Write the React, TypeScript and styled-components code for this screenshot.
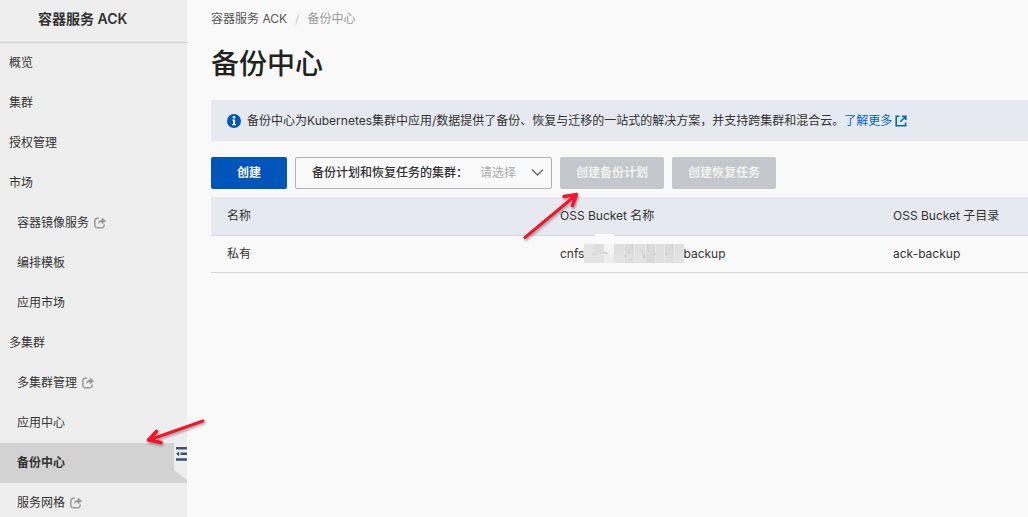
import React from "react";
import styled, { createGlobalStyle } from "styled-components";

const GlobalStyle = createGlobalStyle`
  * { box-sizing: border-box; }
  body {
    margin: 0;
    background: #f9f9f9;
    color: #333;
    font-family: Inter, "Noto Sans CJK SC", sans-serif;
    font-size: 12px;
    line-height: 20px;
  }
  button, select { font: inherit; }
`;

const Page = styled.div`
  position: relative;
  display: flex;
  height: 100vh;
  overflow: hidden;
`;

const Sidebar = styled.aside`
  flex: 0 0 187px;
  background: #eee;
  overflow: hidden;
`;

const ProductName = styled.div`
  height: 43px;
  padding: 9px 0 0 38px;
  border-bottom: 1px solid #ccc;
  font-size: 14px;
  font-weight: 600;
`;

const Menu = styled.ul`
  margin: 0;
  padding: 0;
  list-style: none;
`;

const MenuItem = styled.li`
  position: relative;
`;

const MenuLink = styled.a<{ $nested?: boolean; $active?: boolean }>`
  display: flex;
  align-items: center;
  gap: 5px;
  height: 40px;
  padding-left: ${(p) => (p.$nested ? 17 : 9)}px;
  background: ${(p) => (p.$active ? "#d2d2d2" : "transparent")};
  color: #333;
  font-weight: ${(p) => (p.$active ? 600 : 400)};
  text-decoration: none;
`;

const CollapseButton = styled.button`
  position: absolute;
  top: 0;
  right: 0;
  width: 13px;
  height: 38px;
  padding: 0;
  border: 0;
  background: none;
  svg { display: block; }
`;

const Main = styled.main`
  flex: 1;
  min-width: 0;
  padding: 9px 0 0 24px;
`;

const Breadcrumb = styled.nav`
  display: flex;
  gap: 8px;
  color: #999;
  a { color: #555; text-decoration: none; }
`;

const Slash = styled.span`
  color: #ccc;
`;

const Title = styled.h1`
  margin: 16px 0;
  font-size: 28px;
  line-height: 39px;
  font-weight: 500;
  color: #222;
`;

const Notice = styled.div`
  display: flex;
  align-items: center;
  gap: 6px;
  height: 41px;
  padding-left: 16px;
  background: #e6e9f0;
  white-space: nowrap;
`;

const NoticeLink = styled.a`
  display: inline-flex;
  align-items: center;
  gap: 3px;
  color: #0064c8;
  text-decoration: none;
`;

const Toolbar = styled.div`
  display: flex;
  gap: 8px;
  margin: 16px 0 8px;
`;

const Button = styled.button<{ $wide?: boolean }>`
  width: ${(p) => (p.$wide ? 104 : 76)}px;
  height: 32px;
  padding: 0;
  border: 0;
  border-radius: 2px;
  background: #0055bb;
  color: #fff;
  font-weight: 600;
  white-space: nowrap;
  &:disabled { background: #c4c8cc; color: #f0f1f2; }
`;

const ClusterPicker = styled.label`
  position: relative;
  display: flex;
  align-items: center;
  width: 257px;
  height: 32px;
  padding-left: 16px;
  border: 1px solid #aeb2b6;
  border-radius: 2px;
  font-weight: 500;
  white-space: nowrap;
  svg { position: absolute; right: 7px; top: 10px; pointer-events: none; }
`;

const Select = styled.select`
  flex: 1;
  min-width: 0;
  height: 30px;
  margin-left: 12px;
  padding: 0;
  border: 0;
  background: transparent;
  color: #aaa;
  font-weight: 400;
  appearance: none;
`;

const Table = styled.table`
  width: 100%;
  table-layout: fixed;
  border-collapse: separate;
  border-spacing: 0;
  white-space: nowrap;
`;

const Column = styled.col`
  width: 333px;
`;

const HeadCell = styled.th`
  height: 39px;
  padding: 0 0 0 16px;
  border-bottom: 1px solid #d4d7dc;
  background: #e6e9f0;
  font-weight: 400;
  text-align: left;
`;

const Cell = styled.td`
  height: 37px;
  padding: 0 0 0 16px;
  border-bottom: 1px solid #d4d7dc;
`;

const BucketName = styled.span`
  display: flex;
`;

const Redaction = styled.span`
  position: relative;
  width: 99px;
  svg { position: absolute; left: 0; top: -11px; }
`;

const Annotations = styled.svg`
  position: absolute;
  left: 0;
  top: 0;
  pointer-events: none;
  filter: drop-shadow(1px 2px 1px rgba(0, 0, 0, 0.3));
`;

const ShareIcon = () => (
  <svg width="12" height="12" viewBox="0 0 12 12" fill="none" aria-hidden="true">
    <path d="M5 1.300H3.300A2.500 2.500 0 0 0 .8 3.800v4.400a2.500 2.500 0 0 0 2.500 2.500h4.400a2.500 2.500 0 0 0 2.500-2.500V7.600" stroke="#999" strokeWidth="1.500" />
    <path d="M7.800.6 12 4 7.800 7.400V5.300C6.200 5.300 5 5.900 4 7.300 4.100 4.600 5.400 2.900 7.800 2.700Z" fill="#999" />
  </svg>
);

const InfoIcon = () => (
  <svg width="14" height="14" viewBox="0 0 14 14" aria-hidden="true">
    <circle cx="7" cy="7" r="7" fill="#0055bb" />
    <circle cx="7" cy="3.300" r="1.300" fill="#fff" />
    <path d="M5.400 5.500H8.100V10h.8v1.300H5.200V10H6V6.800h-.6Z" fill="#fff" />
  </svg>
);

const ExternalIcon = () => (
  <svg width="12" height="12" viewBox="0 0 12 12" fill="none" stroke="#0064c8" strokeWidth="1.600" aria-hidden="true">
    <path d="M4.500 1.200H1.200v9.600h9.400V7.400M6.900 1.200h3.900v3.900M10.500 1.500 5.300 6.700" />
  </svg>
);

const CollapseIcon = () => (
  <svg width="13" height="38" viewBox="0 0 13 38" aria-hidden="true">
    <path d="M0 0h13v37L0 27Z" fill="#eee" />
    <path d="M2 4h11v2.500H2ZM6.500 9.500H13V12H6.500ZM2 15.200h11v2.500H2ZM5.200 8.400v4.800L2 10.800Z" fill="#40506a" />
  </svg>
);

const Mosaic = () => (
  <svg width="100" height="32" viewBox="0 0 100 32" aria-hidden="true">
    <path d="M0 11h20v19H0Z" fill="#e4e4e4" />
    <path d="M10 11h10v10H10Z" fill="#dedede" />
    <path d="M11 1h19v9H11Z" fill="#fcfcfc" />
    <path d="M20 11h10v10H20Z" fill="#f5f5f5" />
    <path d="M20 21h10v9H20Z" fill="#ededed" />
    <path d="M30 11h70v19H30Z" fill="#dfdfdf" />
    <path d="M41 11h10v10H41ZM61 11h10v19H61ZM81 11h10v10H81Z" fill="#dadada" />
    <path d="M30 21h10v9H30ZM51 21h9v9h-9ZM90 21h10v9H90Z" fill="#e3e3e3" />
    <path d="M40.500 11v19M50.500 11v19M61.500 11v19M71.500 11v19M80.500 11v19M90.500 11v19" stroke="#e9e9e9" />
    <path d="M20 20h3v1M10 20v2M41 22v2M60 21v4M71 20v2M82 20v2" stroke="#b0b0b0" fill="none" />
  </svg>
);

type Entry = { label: string; nested?: boolean; external?: boolean; active?: boolean };

const entries: Entry[] = [
  { label: "概览" },
  { label: "集群" },
  { label: "授权管理" },
  { label: "市场" },
  { label: "容器镜像服务", nested: true, external: true },
  { label: "编排模板", nested: true },
  { label: "应用市场", nested: true },
  { label: "多集群" },
  { label: "多集群管理", nested: true, external: true },
  { label: "应用中心", nested: true },
  { label: "备份中心", nested: true, active: true },
  { label: "服务网格", nested: true, external: true },
];

export default function App() {
  return (
    <Page>
      <GlobalStyle />
      <Sidebar>
        <ProductName>容器服务 ACK</ProductName>
        <nav>
          <Menu>
            {entries.map((e) => (
              <MenuItem key={e.label}>
                <MenuLink href="#" $nested={e.nested} $active={e.active}>
                  {e.label}
                  {e.external && <ShareIcon />}
                </MenuLink>
                {e.active && (
                  <CollapseButton aria-label="收起导航">
                    <CollapseIcon />
                  </CollapseButton>
                )}
              </MenuItem>
            ))}
          </Menu>
        </nav>
      </Sidebar>
      <Main>
        <Breadcrumb>
          <a href="#">容器服务 ACK</a>
          <Slash>/</Slash>
          <span>备份中心</span>
        </Breadcrumb>
        <Title>备份中心</Title>
        <Notice>
          <InfoIcon />
          <span>
            备份中心为Kubernetes集群中应用/数据提供了备份、恢复与迁移的一站式的解决方案，并支持跨集群和混合云。
            <NoticeLink href="#">
              了解更多
              <ExternalIcon />
            </NoticeLink>
          </span>
        </Notice>
        <Toolbar>
          <Button>创建</Button>
          <ClusterPicker>
            备份计划和恢复任务的集群：
            <Select defaultValue="">
              <option value="">请选择</option>
            </Select>
            <svg width="13" height="9" viewBox="0 0 13 9" fill="none" stroke="#666" strokeWidth="1.400" aria-hidden="true">
              <path d="m1 1.500 5.500 5.500L12 1.500" />
            </svg>
          </ClusterPicker>
          <Button $wide disabled>创建备份计划</Button>
          <Button $wide disabled>创建恢复任务</Button>
        </Toolbar>
        <Table>
          <colgroup>
            <Column />
            <Column />
            <col />
          </colgroup>
          <thead>
            <tr>
              <HeadCell>名称</HeadCell>
              <HeadCell>OSS Bucket 名称</HeadCell>
              <HeadCell>OSS Bucket 子目录</HeadCell>
            </tr>
          </thead>
          <tbody>
            <tr>
              <Cell>私有</Cell>
              <Cell>
                <BucketName>
                  cnfs
                  <Redaction>
                    <Mosaic />
                  </Redaction>
                  backup
                </BucketName>
              </Cell>
              <Cell>ack-backup</Cell>
            </tr>
          </tbody>
        </Table>
      </Main>
      <Annotations width="780" height="517" viewBox="0 0 780 517" fill="none" stroke="#f5142a" strokeWidth="3" strokeLinecap="round" strokeLinejoin="round" aria-hidden="true">
        <path d="M525 237.500 576 195" />
        <path d="M564 196.500l12.500-2-4 11" strokeWidth="3.600" />
        <path d="M203 421 149 440" />
        <path d="M156.500 431.500 148.500 440l12.500 2.500" strokeWidth="3.600" />
      </Annotations>
    </Page>
  );
}
